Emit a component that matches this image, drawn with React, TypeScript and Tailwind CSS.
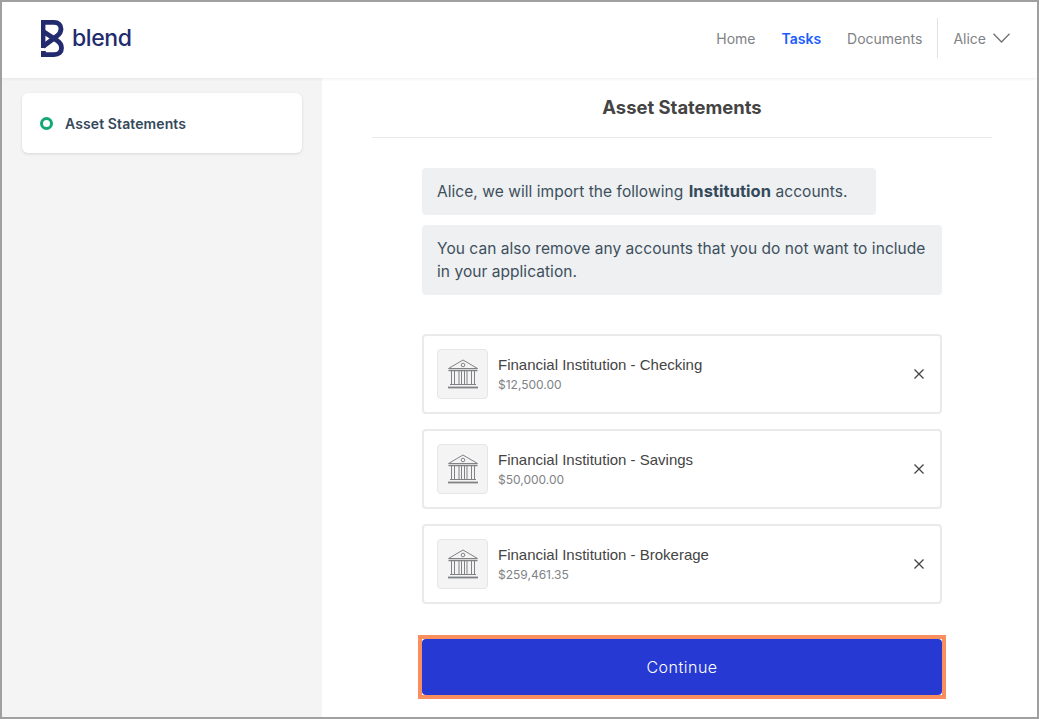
import React from "react";

const accounts = [
  { name: "Financial Institution - Checking", amount: "$12,500.00" },
  { name: "Financial Institution - Savings", amount: "$50,000.00" },
  { name: "Financial Institution - Brokerage", amount: "$259,461.35" },
];

const BlendMark = () => (
  <svg width="23" height="37" viewBox="0 0 23 37" fill="none" stroke="#232b6f" strokeWidth="4.8">
    <path d="M0 2.4H13C17.5 2.4 20 5 20 9C20 12 18.5 14 16 16L2 26.5" />
    <path d="M0 34.6H13C18 34.6 20.5 32 20.5 28C20.5 24.5 19 22.5 16 20.5L1.5 11" />
    <path d="M2.2 0V28" strokeWidth="4.4" />
    <path d="M0 31H4.8V37H0Z" fill="#232b6f" stroke="none" />
  </svg>
);

const BankIcon = () => (
  <svg width="32" height="32" viewBox="0 0 32 32" fill="none" stroke="#808285" strokeWidth="1">
    <path d="M1.5 10.5L16 2L30.5 10.5Z" strokeLinejoin="round" />
    <circle cx="16" cy="7" r="1.8" />
    <path d="M1.5 12.5H30.5" strokeWidth="1.5" />
    <path d="M4.5 13V26M7.5 13V26M12 13V26M14.5 13V26M17.5 13V26M20 13V26M24.5 13V26M27.5 13V26" />
    <path d="M3 26.5H29" />
    <path d="M1 29.5H31" strokeWidth="1.8" />
  </svg>
);

const CloseIcon = () => (
  <svg width="12" height="12" viewBox="0 0 12 12" fill="none" stroke="#444" strokeWidth="1.3">
    <path d="M1.5 1.5L10.5 10.5M10.5 1.5L1.5 10.5" />
  </svg>
);

const AccountCard = ({ name, amount }: { name: string; amount: string }) => (
  <div className="flex h-20 items-center rounded border-2 border-[#e9eaeb] pl-[13px] pr-[15px]">
    <div className="flex h-[50px] w-[51px] items-center justify-center rounded border border-[#e6e6e6] bg-[#f4f4f4]">
      <BankIcon />
    </div>
    <div className="ml-[10px] flex-1 pt-[2px]">
      <div className="font-['Liberation_Sans',sans-serif] text-[15px] leading-[20px] text-[#444444]">
        {name}
      </div>
      <div className="text-[12px] leading-[20px] text-[#808285]">{amount}</div>
    </div>
    <CloseIcon />
  </div>
);

export default function App() {
  return (
    <div className="flex h-[719px] w-[1039px] flex-col overflow-hidden border-2 border-[#a0a0a0] bg-white font-['Inter',sans-serif]">
      <header className="z-10 flex h-[76px] shrink-0 items-center justify-between pb-[4px] pl-[39px] pr-[27px] shadow-[0_1px_3px_rgba(0,0,0,0.07)]">
        <div className="flex items-center gap-[8px]">
          <BlendMark />
          <span className="text-[23px] font-medium leading-none tracking-[-0.4px] text-[#232b6f]">blend</span>
        </div>
        <nav className="flex items-center text-[14px] text-[#808285]">
          <span>Home</span>
          <span className="ml-[26px] font-semibold text-[#1a5cff]">Tasks</span>
          <span className="ml-[26px]">Documents</span>
          <div className="ml-[15px] h-10 w-px bg-[#e2e2e2]" />
          <span className="ml-[15px]">Alice</span>
          <svg className="ml-[7px]" width="17" height="10" viewBox="0 0 17 10" fill="none" stroke="#6f7173" strokeWidth="1.3">
            <path d="M0.5 0.8L8.5 9L16.5 0.8" />
          </svg>
        </nav>
      </header>
      <div className="flex min-h-0 flex-1">
        <aside className="w-80 shrink-0 bg-[#f4f4f4] px-5 pt-[15px]">
          <div className="flex h-[60px] items-center rounded-md bg-white pl-[18px] shadow-[0_1px_3px_rgba(0,0,0,0.12)]">
            <span className="h-[13px] w-[13px] rounded-full border-[3px] border-[#12a874]" />
            <span className="ml-3 text-[14px] font-semibold tracking-[0.1px] text-[#34495a]">Asset Statements</span>
          </div>
        </aside>
        <main className="flex-1 pl-[50px] pr-[45px]">
          <h1 className="flex h-[60px] items-center justify-center border-b border-[#e9eaeb] pt-[1px] text-[18.4px] font-bold text-[#444444]">
            Asset Statements
          </h1>
          <div className="mx-[50px] mt-[30px]">
            <div className="flex flex-col items-start gap-[10px] text-[15.5px] leading-[23px] tracking-[0.05px] text-[#3d4f5c]">
              <p className="rounded bg-[#eef0f1] py-3 pl-[15px] pr-[28px]">
                Alice, we will import the following <b className="ml-[1px] text-[16.5px] font-bold text-[#34495a]">Institution</b> accounts.
              </p>
              <p className="w-full rounded bg-[#eef0f1] px-[15px] py-3">
                You can also remove any accounts that you do not want to include in your application.
              </p>
            </div>
            <div className="mt-[39px] flex flex-col gap-[15px]">
              {accounts.map((account) => (
                <AccountCard key={account.name} {...account} />
              ))}
            </div>
            <div className="-mx-1 mt-[31px] border-4 border-[#f98f5e] bg-white">
              <button className="block h-14 w-full rounded-sm bg-[#2639d3] text-[16px] font-light tracking-[0.5px] text-white">
                Continue
              </button>
            </div>
          </div>
        </main>
      </div>
    </div>
  );
}
